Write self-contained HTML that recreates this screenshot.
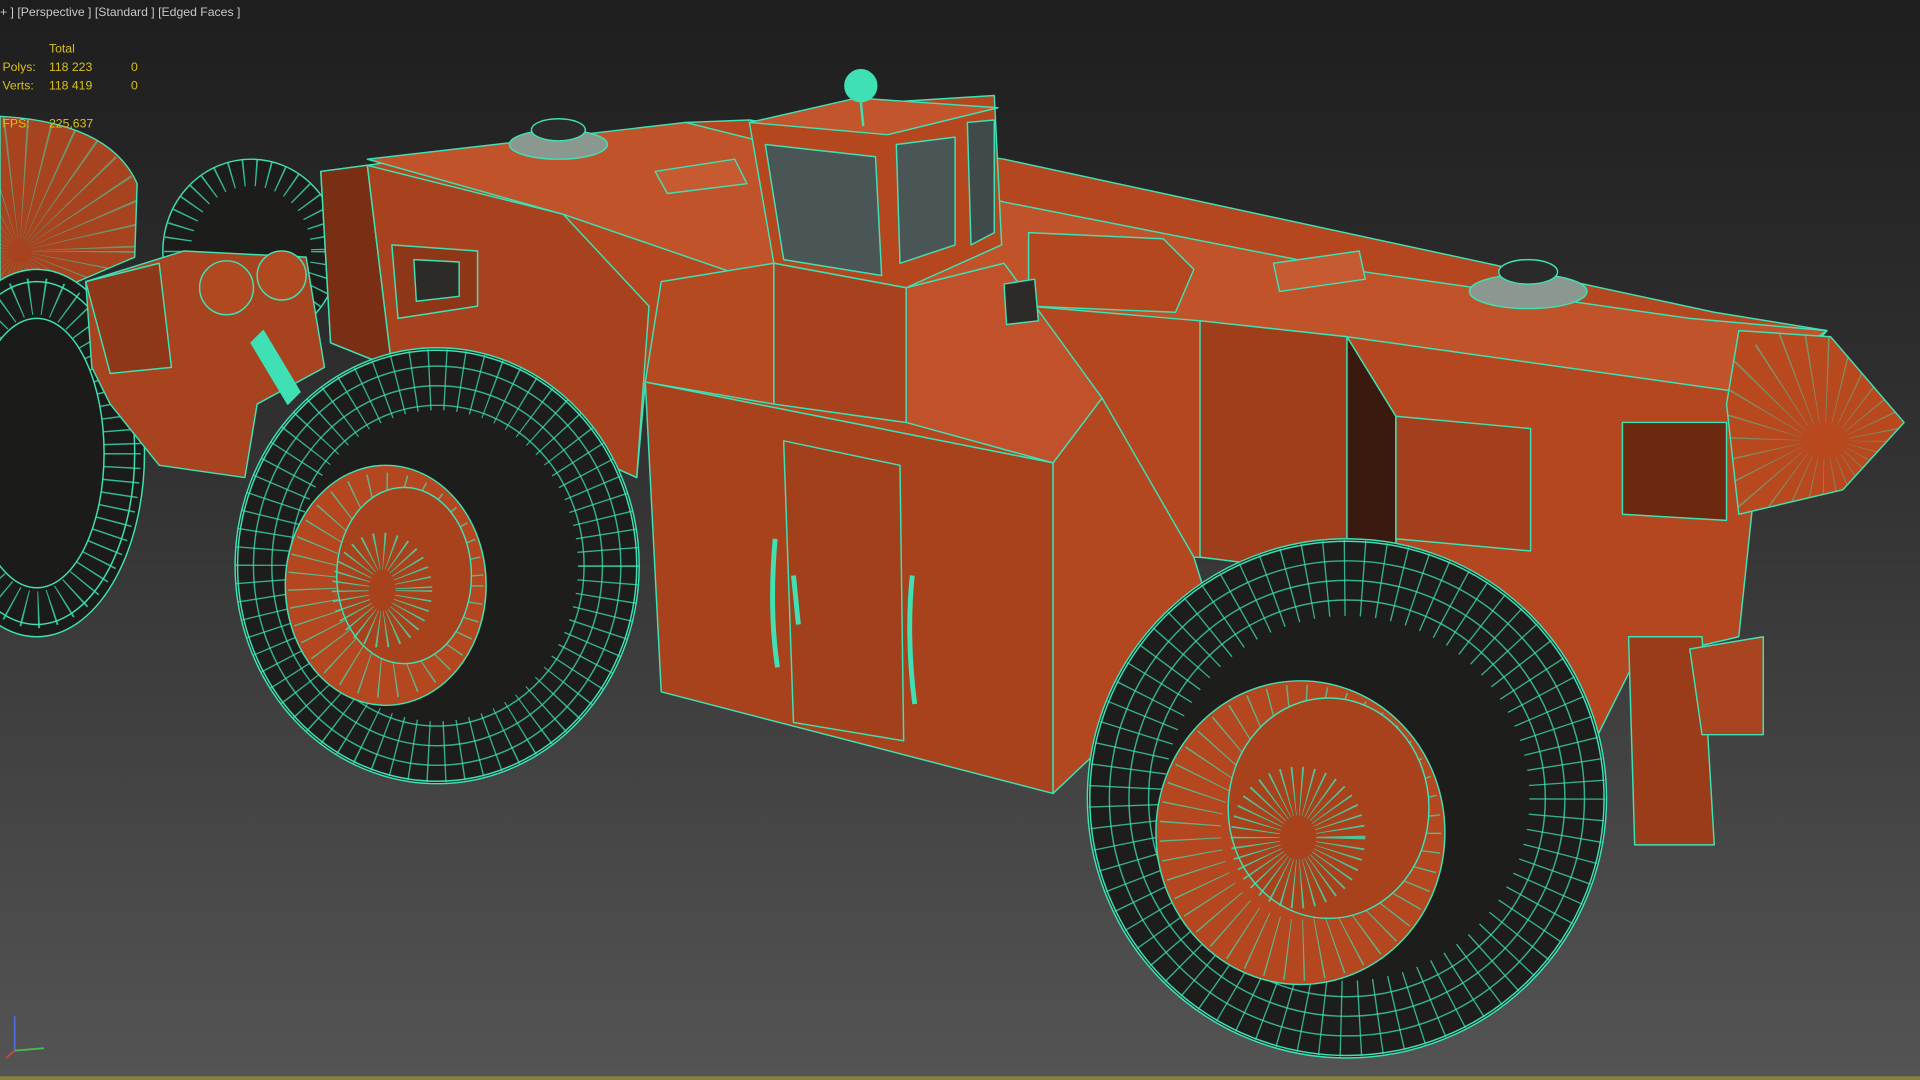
<!DOCTYPE html>
<html><head><meta charset="utf-8"><style>
html,body{margin:0;padding:0;width:1920px;height:1080px;overflow:hidden;background:#2a2a2a}
svg{display:block}
.t{font-family:"Liberation Sans",sans-serif;font-size:10px}
</style></head><body>
<svg width="1920" height="1080" viewBox="0 0 1568 882" preserveAspectRatio="none">
<defs>
<linearGradient id="bg" x1="0" y1="0" x2="0" y2="1">
<stop offset="0" stop-color="#1e1e1e"/><stop offset="0.45" stop-color="#333"/><stop offset="1" stop-color="#545454"/>
</linearGradient>
<clipPath id="bump"><path d="M1420 270 L1495 275 L1555 345 L1505 400 L1420 420 L1410 330Z"/></clipPath>
<clipPath id="fan"><path d="M0 95 Q90 100 112 150 L110 210 L40 240 L0 240Z"/></clipPath>
</defs>
<rect width="1568" height="882" fill="url(#bg)"/>
<rect y="879" width="1568" height="3" fill="#8a8040"/>
<g stroke="#3fe0b4" stroke-width="1.2" stroke-linejoin="round">
<!-- back wheel behind -->
<ellipse cx="205" cy="205" rx="72" ry="75" fill="#1c1d1b"/>
<ellipse cx="205" cy="205" rx="60" ry="64" fill="none" stroke-width="22" stroke-dasharray="1.2 9" opacity="0.8"/>
<!-- far left front fan -->
<path d="M0 95 Q90 100 112 150 L110 210 L40 240 L0 240Z" fill="#a8431f"/>
<ellipse cx="16" cy="205" rx="60" ry="60" fill="none" stroke-width="100" stroke-dasharray="1 10" opacity="0.5" clip-path="url(#fan)"/>
<!-- left wheel -->
<ellipse cx="30" cy="370" rx="88" ry="150" fill="#1b1c1a"/>
<ellipse cx="30" cy="370" rx="70" ry="128" fill="none" stroke-width="30" stroke-dasharray="1.2 10" opacity="0.8"/>
<ellipse cx="30" cy="370" rx="55" ry="110" fill="none"/>
<ellipse cx="30" cy="370" rx="80" ry="140" fill="none"/>
<!-- coupler -->
<path d="M70 230 L150 205 L250 210 L265 300 L210 330 L200 390 L130 380 L90 330 L75 300Z" fill="#a8431f"/>
<path d="M70 230 L130 215 L140 300 L90 305Z" fill="#8f3819"/>
<circle cx="185" cy="235" r="22" fill="#b04820"/>
<circle cx="230" cy="225" r="20" fill="#b04820"/>
<path d="M215 270 L245 320 L235 330 L205 280Z" fill="#3fe0b4"/>
<!-- main rear body -->
<path d="M262 140 L560 100 L612 98 L820 130 L1400 255 L1492 270 L1440 330 L1420 520 L1335 540 L1300 610 L1150 462 L975 455 L860 378 L527 312 L520 390 L320 300 L270 280Z" fill="#b4471f"/>
<path d="M262 140 L300 135 L320 300 L270 280Z" fill="#7a2e14"/>
<path d="M300 135 L460 175 L530 250 L520 390 L320 300Z" fill="#a8421e"/>
<path d="M320 200 L390 205 L390 250 L325 260Z" fill="#8d3718"/>
<path d="M338 212 L375 214 L375 242 L340 246Z" fill="#2d2b28"/>
<path d="M300 130 L560 100 L820 165 L1100 220 L1380 260 L1492 270 L1420 320 L1100 275 L980 262 L840 250 L620 230 L460 175Z" fill="#c0532a"/>
<path d="M980 262 L1100 275 L1140 340 L1140 465 L1100 470 L980 455Z" fill="#a03e1b"/>
<path d="M1100 275 L1140 340 L1140 470 L1100 470Z" fill="#3a1a0e"/>
<path d="M1140 340 L1250 350 L1250 450 L1140 440Z" fill="#a33f1c"/>
<!-- rear bumper -->
<path d="M1420 270 L1495 275 L1555 345 L1505 400 L1420 420 L1410 330Z" fill="#b8491f"/>
<ellipse cx="1490" cy="360" rx="60" ry="55" fill="none" stroke-width="80" stroke-dasharray="1 12" opacity="0.45" clip-path="url(#bump)"/>
<path d="M1325 345 L1410 345 L1410 425 L1325 420Z" fill="#6d2810"/>
<path d="M1330 520 L1390 520 L1400 690 L1335 690Z" fill="#9a3b1a"/>
<path d="M1380 530 L1440 520 L1440 600 L1390 600Z" fill="#a84520"/>
<!-- front lower block -->
<path d="M527 312 L860 378 L860 648 L540 565Z" fill="#a8421d"/>
<path d="M640 360 L735 380 L738 605 L648 590Z" fill="#a3401c"/>
<path d="M860 378 L900 325 L975 455 L995 520 L860 648Z" fill="#b24720"/>
<path d="M527 312 L540 230 L632 215 L632 330Z" fill="#b5491f"/>
<path d="M632 330 L740 345 L860 378 L900 325 L820 215 L740 235Z" fill="#c0512a"/>
<path d="M633 440 Q628 500 635 545" fill="none" stroke-width="4"/>
<path d="M745 470 Q740 520 747 575" fill="none" stroke-width="4"/>
<path d="M648 470 L652 510" fill="none" stroke-width="4"/>
<!-- cab -->
<path d="M612 100 L700 85 L812 78 L818 200 L740 235 L632 215Z" fill="#b5471f"/>
<path d="M625 118 L715 128 L720 225 L640 212Z" fill="#4a5555"/>
<path d="M732 118 L780 112 L780 200 L735 215Z" fill="#4a5555"/>
<path d="M790 100 L812 98 L812 190 L793 200Z" fill="#404a4a"/>
<path d="M612 100 L700 80 L815 88 L725 110Z" fill="#c2552c"/>
<path d="M632 215 L740 235 L740 345 L632 330Z" fill="#a8421e"/>
<circle cx="703" cy="70" r="13" fill="#3fe0b4"/>
<line x1="703" y1="83" x2="705" y2="103" stroke-width="2"/>
<!-- top details -->
<ellipse cx="456" cy="118" rx="40" ry="12" fill="#8a9890"/>
<ellipse cx="456" cy="106" rx="22" ry="9" fill="#2a2a2a"/>
<ellipse cx="1248" cy="238" rx="48" ry="14" fill="#8a9890"/>
<ellipse cx="1248" cy="222" rx="24" ry="10" fill="#2a2a2a"/>
<path d="M535 140 L600 130 L610 150 L545 158Z" fill="#c65a30"/>
<path d="M840 190 L950 195 L975 220 L960 255 L840 250Z" fill="#b5471f"/>
<path d="M1040 215 L1110 205 L1115 228 L1045 238Z" fill="#c65a30"/>
<path d="M820 232 L845 228 L848 262 L822 265Z" fill="#2d2b28"/>
<!-- front wheel -->
<ellipse cx="357" cy="462" rx="165" ry="178" fill="#1d1e1c"/>
<ellipse cx="357" cy="462" rx="140" ry="152" fill="none" stroke-width="50" stroke-dasharray="1.1 12" opacity="0.75"/>
<ellipse cx="357" cy="462" rx="163" ry="176" fill="none"/>
<ellipse cx="357" cy="462" rx="150" ry="163" fill="none" opacity="0.75"/>
<ellipse cx="357" cy="462" rx="135" ry="147" fill="none" opacity="0.75"/>
<ellipse cx="357" cy="462" rx="120" ry="131" fill="none" opacity="0.75"/>
<ellipse cx="315" cy="478" rx="82" ry="98" fill="#b4471f"/>
<ellipse cx="315" cy="478" rx="60" ry="72" fill="none" stroke-width="40" stroke-dasharray="1 11" opacity="0.7"/>
<ellipse cx="330" cy="470" rx="55" ry="72" fill="#a8421d"/>
<ellipse cx="312" cy="482" rx="26" ry="32" fill="none" stroke-width="30" stroke-dasharray="1 5" opacity="0.8"/>
<!-- rear wheel -->
<ellipse cx="1100" cy="652" rx="212" ry="212" fill="#1d1e1c"/>
<ellipse cx="1100" cy="652" rx="180" ry="180" fill="none" stroke-width="62" stroke-dasharray="1.1 14" opacity="0.75"/>
<ellipse cx="1100" cy="652" rx="210" ry="210" fill="none"/>
<ellipse cx="1100" cy="652" rx="194" ry="194" fill="none" opacity="0.75"/>
<ellipse cx="1100" cy="652" rx="178" ry="178" fill="none" opacity="0.75"/>
<ellipse cx="1100" cy="652" rx="162" ry="162" fill="none" opacity="0.75"/>
<ellipse cx="1062" cy="680" rx="118" ry="124" fill="#b4471f"/>
<ellipse cx="1062" cy="680" rx="90" ry="96" fill="none" stroke-width="50" stroke-dasharray="1 12" opacity="0.7"/>
<ellipse cx="1085" cy="660" rx="82" ry="90" fill="#a8421d"/>
<ellipse cx="1060" cy="684" rx="35" ry="38" fill="none" stroke-width="40" stroke-dasharray="1 5" opacity="0.8"/>
</g>
<g stroke-width="1.5"><line x1="12" y1="858" x2="12" y2="830" stroke="#4a6be0"/><line x1="12" y1="858" x2="36" y2="856" stroke="#3fbf4a"/><line x1="12" y1="858" x2="5" y2="864" stroke="#d04040"/></g>
<text class="t" x="0" y="13" fill="#c8c8c8">+ ] [Perspective ] [Standard ] [Edged Faces ]</text>
<g class="t" fill="#d8c020">
<text x="40" y="43">Total</text>
<text x="2" y="58">Polys:</text><text x="40" y="58">118 223</text><text x="107" y="58">0</text>
<text x="2" y="73">Verts:</text><text x="40" y="73">118 419</text><text x="107" y="73">0</text>
<text x="2" y="104">FPS:</text><text x="40" y="104">225,637</text>
</g>
</svg>
</body></html>
